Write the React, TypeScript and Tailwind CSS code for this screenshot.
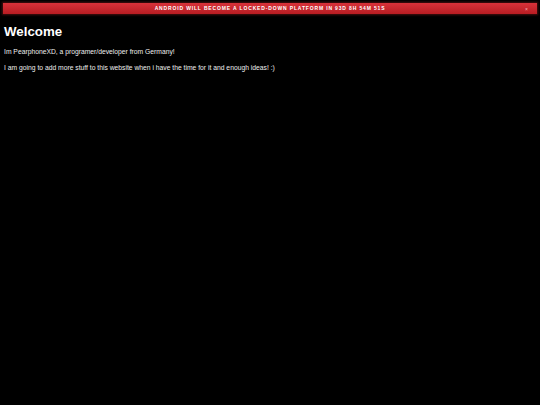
import React from 'react';

const App: React.FC = () => {
    return (
        <div className="min-h-[405px] w-full bg-black text-white font-['Liberation_Sans',Arial,sans-serif]">
            {/* Countdown banner */}
            <div className="px-[3px] pt-[3px]">
                <div className="relative flex h-[11px] items-center justify-center bg-gradient-to-b from-[#d8323a] to-[#b81c22] shadow-[0_0_2px_1px_rgba(90,20,20,0.8)]">
                    <span className="text-[5px] font-black uppercase leading-none tracking-[0.85px] text-white">
                        Android will become a locked-down platform in 93d 8h 54m 51s
                    </span>
                    <button className="absolute right-[9px] top-1/2 -translate-y-1/2 text-[5px] leading-none text-[#f3b0b4]">
                        ×
                    </button>
                </div>
            </div>

            <div className="px-[4px]">
                <h1 className="mt-[11px] text-[13.3px] font-bold leading-none">Welcome</h1>
                <p className="mt-[11px] text-[6.75px] leading-none text-[#eeeeee]">Im PearphoneXD, a programer/developer from Germany!</p>
                <p className="mt-[9px] text-[6.75px] leading-none text-[#eeeeee]">I am going to add more stuff to this website when i have the time for it and enough ideas! :)</p>
            </div>
        </div>
    );
};

export default App;
